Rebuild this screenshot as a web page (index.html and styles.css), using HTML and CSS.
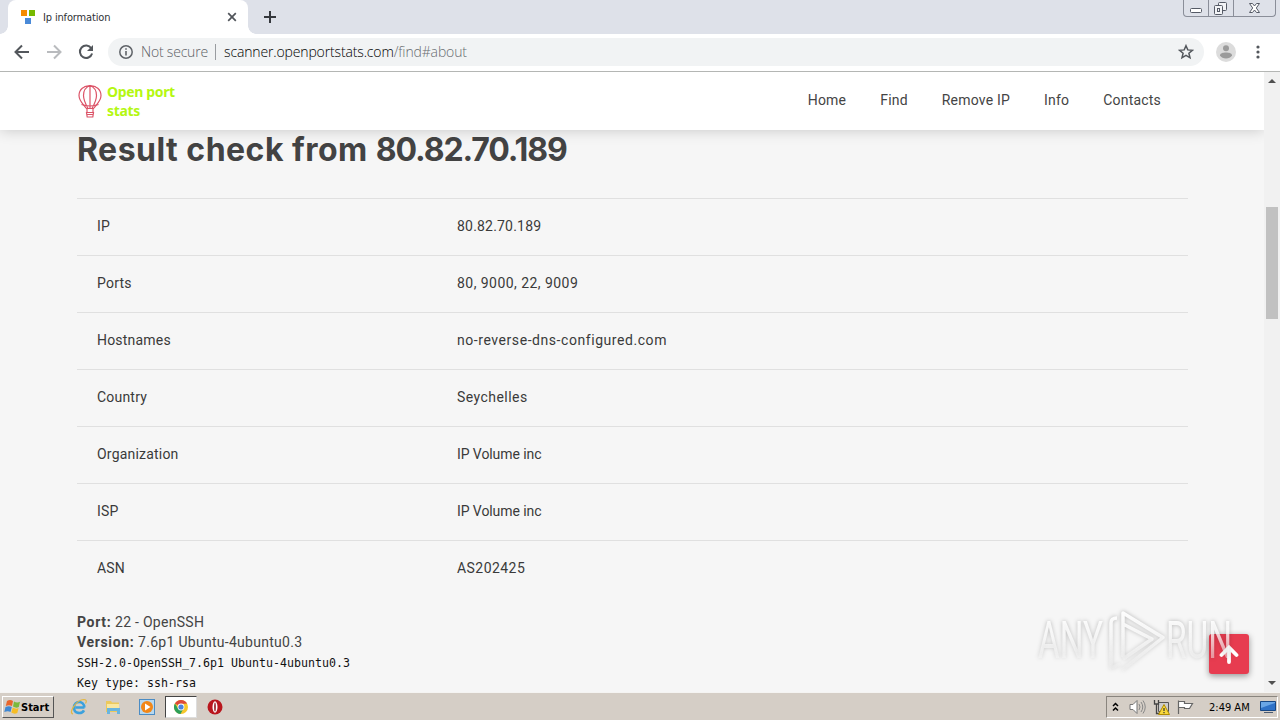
FILE: index.html
```html
<!DOCTYPE html>
<html lang="en">
<head>
    <meta charset="UTF-8">
    <meta name="viewport" content="width=device-width, initial-scale=1.0">
    <title>Ip information</title>
    <link rel="stylesheet" href="styles.css">
</head>
<body>
    <div class="screen">
        <!-- tab strip -->
        <div class="tabs">
            <div class="tab">
                <svg class="favicon" width="14" height="14" viewBox="0 0 14 14">
                    <path fill="#f58b00" d="M0 0h6v6H0z"/>
                    <path fill="#76b900" d="M8 0h6v6H8z"/>
                    <path fill="#4a8ad8" d="M4 8h6v6H4z"/>
                </svg>
                <span class="tab-title">Ip information</span>
                <svg class="tab-close" width="10" height="10" viewBox="0 0 10 10">
                    <path d="M1.2 1.2l7.6 7.6M8.8 1.2L1.2 8.8" stroke="#50545a" stroke-width="1.7"/>
                </svg>
            </div>
            <svg class="tab-new" width="12" height="12" viewBox="0 0 12 12">
                <path d="M6 0v12M0 6h12" stroke="#35383d" stroke-width="2"/>
            </svg>
            <div class="window-buttons">
                <span class="wb wb-min">
                    <svg width="24" height="16" viewBox="0 0 24 16"><rect x="6.500" y="8.500" width="11" height="4" rx="1" fill="#fff" stroke="#555a66"/></svg>
                </span>
                <span class="wb wb-max">
                    <svg width="24" height="16" viewBox="0 0 24 16">
                        <g fill="#f2f3f6" stroke="#555a66"><rect x="9.500" y="2.500" width="8" height="8" rx="1"/><rect x="5.500" y="5.500" width="8" height="9" rx="1"/><rect x="8.500" y="8.500" width="2" height="3"/></g>
                    </svg>
                </span>
                <span class="wb wb-close">
                    <svg width="41" height="16" viewBox="0 0 41 16"><path d="M15.500 3.500h3l2 2.500 2-2.500h3l-3.200 4.500 3.200 4.500h-3l-2-2.500-2 2.500h-3L18.700 8z" fill="#fff" stroke="#555a66"/></svg>
                </span>
            </div>
        </div>

        <!-- toolbar -->
        <div class="toolbar">
            <div class="nav-icons">
                <svg width="16" height="16" viewBox="0 0 16 16"><path d="M15 8H2M8 1.500L1.500 8 8 14.500" fill="none" stroke="#53575c" stroke-width="2"/></svg>
                <svg width="16" height="16" viewBox="0 0 16 16"><path d="M1 8h13M8 1.500L14.500 8 8 14.500" fill="none" stroke="#b9bbbe" stroke-width="2"/></svg>
                <svg width="16" height="16" viewBox="0 0 16 16"><path d="M13.300 4.300A6.200 6.200 0 1 0 14.100 9.500" fill="none" stroke="#53575c" stroke-width="2"/><path d="M15 1v6H9z" fill="#53575c"/></svg>
            </div>
            <div class="address">
                <svg class="info" width="14" height="14" viewBox="0 0 14 14"><circle cx="7" cy="7" r="6.200" fill="none" stroke="#5f6368" stroke-width="1.500"/><path d="M7 6v4.500M7 3.300v1.500" stroke="#5f6368" stroke-width="1.600"/></svg>
                <span class="secure">Not secure</span>
                <span class="divider"></span>
                <span class="host">scanner.openportstats.com</span><span class="path">/find#about</span>
                <svg class="star" width="16" height="16" viewBox="0 0 16 16"><path d="M8 1.700l1.800 4.200 4.600.4-3.500 3 1.100 4.500L8 11.400l-4 2.400 1.100-4.500-3.500-3 4.600-.4z" fill="none" stroke="#53575c" stroke-width="1.500"/></svg>
            </div>
            <svg class="avatar" width="20" height="20" viewBox="0 0 20 20"><circle cx="10" cy="10" r="10" fill="#dcdcdc"/><circle cx="10" cy="6.300" r="3" fill="#9b9b9b"/><path d="M4 13.500c0-2.200 3-3 6-3s6 .8 6 3c-1 2-3.500 3-6 3s-5-1-6-3z" fill="#9b9b9b"/></svg>
            <svg class="dots" width="4" height="14" viewBox="0 0 4 14"><g fill="#53575c"><circle cx="2" cy="2" r="1.600"/><circle cx="2" cy="7" r="1.600"/><circle cx="2" cy="12" r="1.600"/></g></svg>
        </div>

        <!-- site -->
        <div class="viewport">
            <div class="page">
                <header class="header">
                    <a class="logo">
                        <svg width="24" height="34" viewBox="0 0 24 34">
                            <g fill="none" stroke="#dc5468" stroke-width="1.200">
                                <path d="M8.500 24.500C5 20 1 17 1 11.500 1 5.500 6 1.500 12 1.500s11 4 11 10c0 5.500-4 8.500-7.500 13z"/>
                                <path d="M10 24.500C7 19 5.500 16 5.500 11.500c0-5 2.500-8.500 6.500-10 4 1.500 6.500 5 6.500 10 0 4.500-1.500 7.500-4.500 13M12 1.500v23M3.500 20.500q8.500 3 17 0M6.500 2.500h11"/>
                                <path d="M9 24.500v4M15 24.500v4M8.500 28.500h7l-.7 4.500H9.200zM9 30.500h6"/>
                            </g>
                        </svg>
                        <span class="logo-text">Open port<br>stats</span>
                    </a>
                    <nav class="menu">
                        <a>Home</a>
                        <a>Find</a>
                        <a>Remove IP</a>
                        <a>Info</a>
                        <a>Contacts</a>
                    </nav>
                </header>
                <main class="content">
                    <h2>Result check from <span class="address-ip">80.82.70.189</span></h2>
                    <div class="table">
                        <div class="row"><span>IP</span><span>80.82.70.189</span></div>
                        <div class="row"><span>Ports</span><span class="wide">80, 9000, 22, 9009</span></div>
                        <div class="row"><span>Hostnames</span><span class="wider">no-reverse-dns-configured.com</span></div>
                        <div class="row"><span>Country</span><span class="wide">Seychelles</span></div>
                        <div class="row"><span>Organization</span><span class="tight">IP Volume inc</span></div>
                        <div class="row"><span>ISP</span><span class="tight">IP Volume inc</span></div>
                        <div class="row"><span>ASN</span><span class="wide">AS202425</span></div>
                    </div>
                    <div class="port">
                        <p><b>Port:</b> 22 - OpenSSH</p>
                        <p><b>Version:</b> 7.6p1 Ubuntu-4ubuntu0.3</p>
                        <pre>SSH-2.0-OpenSSH_7.6p1 Ubuntu-4ubuntu0.3
Key type: ssh-rsa</pre>
                    </div>
                </main>
                <a class="to-top">
                    <svg width="20" height="20" viewBox="0 0 20 20"><path d="M10 18V4M2.500 11L10 3.500l7.500 7.500" fill="none" stroke="#fff" stroke-width="3.800" stroke-linecap="round"/></svg>
                </a>
            </div>
            <div class="scrollbar">
                <span class="sb-up"></span>
                <span class="sb-thumb"></span>
                <span class="sb-down"></span>
            </div>
            <!-- watermark -->
            <svg class="watermark" width="210" height="80" viewBox="0 0 210 80">
                <defs>
                    <linearGradient id="fade" gradientUnits="userSpaceOnUse" x1="0" y1="8" x2="0" y2="68">
                        <stop offset="0" stop-color="#fff" stop-opacity=".95"/>
                        <stop offset=".4" stop-color="#fff" stop-opacity=".75"/>
                        <stop offset="1" stop-color="#f2f2f2" stop-opacity=".3"/>
                    </linearGradient>
                </defs>
                <g class="wm-shape">
                    <text x="7" y="54" textLength="65" lengthAdjust="spacingAndGlyphs" fill="url(#fade)">ANY</text>
                    <text x="135" y="54" textLength="66" lengthAdjust="spacingAndGlyphs" fill="url(#fade)">RUN</text>
                    <path d="M86 14q-6 0-6 5v45l9-4M92 53V9l40 24.500L91 66M92 20l29 15-29 20" fill="none" stroke="url(#fade)" stroke-width="3.500" stroke-linejoin="round"/>
                </g>
            </svg>
        </div>

        <!-- taskbar -->
        <div class="taskbar">
            <div class="start">
                <svg width="17" height="16" viewBox="0 0 17 16">
                    <path fill="#e9652b" d="M3 2q3-2 6 0L8 7Q5 5.500 1.800 7z"/>
                    <path fill="#7bb93c" d="M10 2.500q3 2 6 .3L14.800 8Q12 9.500 9 7.500z"/>
                    <path fill="#3f87d2" d="M1.500 8Q5 6.500 7.800 8l-1.300 5Q4 11.500.3 13z"/>
                    <path fill="#f6bd26" d="M8.800 8.500q3 2 5.800.5l-1.300 5q-3 1.500-6-.5z"/>
                </svg>
                <span>Start</span>
            </div>
            <div class="quick">
                <span class="q">
                    <svg width="18" height="18" viewBox="0 0 18 18"><path d="M14.500 9.500h-9M14.300 9.500C14.300 2 4 2.500 4 9.500s8 6.500 10 2.800" fill="none" stroke="#3ba1dd" stroke-width="2.600"/><path d="M3 16C-2 15 6 2 14 1.500c3 0 2.500 2.500 1.500 4" fill="none" stroke="#e3b73f" stroke-width="1.200"/></svg>
                </span>
                <span class="q">
                    <svg width="18" height="18" viewBox="0 0 18 18"><path d="M2 3h5l1 1.500h7V14H2z" fill="#ecc95c"/><path d="M3 6h12v7H3z" fill="#f9e7a0"/><path d="M3 10h13v6h-3v-3H6v3H3z" fill="#69b5df"/></svg>
                </span>
                <span class="q">
                    <svg width="18" height="18" viewBox="0 0 18 18"><rect x="1.500" y="1.500" width="15" height="15" fill="#b7d8ef" stroke="#4b8cc4"/><circle cx="9" cy="9" r="6" fill="#f28718"/><path d="M7 5.500l5.500 3.500L7 12.500z" fill="#fff"/></svg>
                </span>
                <span class="q q-active">
                    <svg width="16" height="16" viewBox="0 0 16 16"><circle cx="8" cy="8" r="7" fill="#f6c72c"/><path d="M8 8L1.900 4.500A7 7 0 0 1 14.100 4.600L8 5z" fill="#dd493a"/><path d="M1.900 4.500A7 7 0 0 0 7.500 15l3-5.500H5z" fill="#2c9f59"/><circle cx="8" cy="8" r="3.400" fill="#fff"/><circle cx="8" cy="8" r="2.600" fill="#4a83e0"/></svg>
                </span>
                <span class="q">
                    <svg width="16" height="16" viewBox="0 0 16 16"><circle cx="8" cy="8" r="7.500" fill="#b9161d"/><ellipse cx="8" cy="8" rx="2.500" ry="5.800" fill="#fff"/><ellipse cx="8" cy="8" rx=".8" ry="4.500" fill="#8d1117"/></svg>
                </span>
            </div>
            <div class="tray">
                <svg class="t-chev" width="7" height="10" viewBox="0 0 7 10"><path d="M1 4l2.500-2.500L6 4M1 8.500L3.500 6 6 8.500" fill="none" stroke="#000" stroke-width="1.500"/></svg>
                <svg class="t-vol" width="17" height="16" viewBox="0 0 17 16"><path d="M1 5.500h3L8 1.500v13l-4-4H1z" fill="#fff" stroke="#777"/><path d="M10 5q2 3 0 6M12 3q3.500 5 0 10M14 1.500q4.500 6.500 0 13" fill="none" stroke="#888"/></svg>
                <svg class="t-net" width="17" height="16" viewBox="0 0 17 16"><path d="M5.500 3.500h10v9h-10z" fill="#ccc" stroke="#555"/><path d="M1.500 1v4h4V1M3.500 5v9.500h5" fill="none" stroke="#444" stroke-width="1.300"/><path d="M11 5.500l5.500 10h-11z" fill="#f8d83b" stroke="#b08b00"/><path d="M11 9v3M11 13v1.200" stroke="#333" stroke-width="1.200"/></svg>
                <svg class="t-flag" width="17" height="16" viewBox="0 0 17 16"><path d="M1.500 15V1.500M1.500 2.500h6v2h8l-3 5h-5v-1h-6" fill="#fff" stroke="#666" stroke-width="1.200"/></svg>
                <span class="clock">2:49 AM</span>
                <svg class="t-desk" width="16" height="14" viewBox="0 0 16 14"><path d="M.5 1.500h15v9H.5z" fill="#2f72c7" stroke="#174784"/><path d="M1 8L15 3v-1H1z" fill="#6aa6e6"/><path d="M4 12.500h9" stroke="#4b5a70"/></svg>
            </div>
        </div>
    </div>
</body>
</html>
```
FILE: styles.css
```css
* {
    margin: 0;
    padding: 0;
    box-sizing: border-box;
}
body {
    overflow: hidden;
}
svg {
    display: block;
    flex: none;
}
.screen {
    display: flex;
    flex-direction: column;
    width: 1280px;
    height: 720px;
    overflow: hidden;
}

/* tabs */
.tabs {
    display: flex;
    height: 34px;
    background: #dee1e9;
    font: 11px "DejaVu Sans Condensed", "DejaVu Sans", sans-serif;
}
.tab {
    position: relative;
    display: flex;
    align-items: center;
    margin-left: 8px;
    padding: 0 11px 0 13px;
    width: 240px;
    background: #fff;
    border-radius: 8px 8px 0 0;
}
.tab::before,
.tab::after {
    content: "";
    position: absolute;
    bottom: 0;
    width: 8px;
    height: 8px;
}
.tab::before {
    left: -8px;
    background: radial-gradient(circle at 0 0, transparent 7.5px, #fff 8px);
}
.tab::after {
    right: -8px;
    background: radial-gradient(circle at 100% 0, transparent 7.5px, #fff 8px);
}
.tab-title {
    flex: 1;
    margin-left: 8px;
    color: #303236;
    letter-spacing: -0.15px;
}
.tab-new {
    margin: 11px 0 0 16px;
}
.window-buttons {
    display: flex;
    margin-left: auto;
    margin-right: 4px;
    width: 93px;
    height: 17px;
    border: 1px solid #8a8e99;
    border-top: 0;
    border-radius: 0 0 4px 4px;
}
.wb + .wb {
    border-left: 1px solid #8a8e99;
}

/* toolbar */
.toolbar {
    display: flex;
    align-items: center;
    height: 38px;
    padding-bottom: 1px;
    background: #fff;
    border-bottom: 1px solid #b4b6b4;
    font: 14px "Open Sans", sans-serif;
}
.nav-icons {
    display: flex;
    gap: 16px;
    margin-left: 14px;
}
.address {
    display: flex;
    align-items: center;
    margin-left: 14px;
    padding: 0 10px 0 11px;
    width: 1096px;
    height: 28px;
    background: #f1f3f4;
    border-radius: 14px;
    white-space: nowrap;
    letter-spacing: -0.14px;
}
.secure,
.host,
.path {
    padding-bottom: 1px;
    font-weight: 300;
}
.secure {
    margin-left: 8px;
    width: 67px;
    color: #5c6065;
    letter-spacing: -0.2px;
}
.divider {
    margin: 0 8px 0 7px;
    width: 1px;
    height: 16px;
    background: #999ca0;
}
.host {
    color: #000;
}
.path {
    color: #686c70;
}
.star {
    margin-left: auto;
}
.avatar {
    margin-left: 12px;
}
.dots {
    margin-left: 20px;
}

/* site */
.viewport {
    position: relative;
    display: flex;
    height: 620px;
}
.page {
    position: relative;
    width: 1264px;
    background: #f6f6f6;
    color: #444;
    font: 14px/20px Roboto, sans-serif;
    overflow: hidden;
}
.header {
    position: relative;
    display: flex;
    justify-content: space-between;
    padding: 0 103px 0 78px;
    height: 58px;
    background: #fff;
    box-shadow: 0 0 14px rgba(0, 0, 0, 0.2);
}
.logo {
    display: flex;
    padding-top: 12px;
}
.logo-text {
    margin: -2px 0 0 5px;
    color: #b4f712;
    font: bold 14px/19px "Noto Sans", sans-serif;
    letter-spacing: -0.35px;
}
.menu {
    display: flex;
    gap: 34px;
    line-height: 57px;
    letter-spacing: 0.2px;
}
.content {
    padding: 0 76px 0 77px;
}
h2 {
    height: 68px;
    color: #434343;
    font: bold 32px/39px Inter, sans-serif;
    letter-spacing: 0.48px;
    white-space: nowrap;
}
.address-ip {
    letter-spacing: -1.1px;
}
.row {
    display: flex;
    height: 57px;
    padding: 0 20px;
    border-top: 1px solid #e0e0e0;
    color: #3a3a3a;
    line-height: 55px;
    letter-spacing: 0.2px;
}
.row span:first-child {
    width: 360px;
}
.wide {
    letter-spacing: 0.45px;
}
.wider {
    letter-spacing: 0.56px;
}
.tight {
    letter-spacing: -0.08px;
}
.port {
    margin-top: 15px;
    letter-spacing: 0.28px;
}
.port b {
    font-weight: 700;
    letter-spacing: 0.65px;
}
.port pre {
    padding-top: 1px;
    color: #111;
    font: 11.6px/20px "DejaVu Sans Mono", monospace;
    letter-spacing: 0.02px;
}
.to-top {
    position: absolute;
    left: 1209px;
    top: 562px;
    display: flex;
    align-items: center;
    justify-content: center;
    width: 40px;
    height: 40px;
    background: #e73c50;
    border-radius: 3px;
    box-shadow: 0 2px 6px rgba(0, 0, 0, 0.4);
}
.scrollbar {
    display: flex;
    flex-direction: column;
    align-items: center;
    width: 16px;
    background: #f1f1f1;
}
.sb-up,
.sb-down {
    border: 4px solid transparent;
}
.sb-up {
    margin-top: 3px;
    border-bottom-color: #505050;
}
.sb-thumb {
    margin-top: 124px;
    width: 12px;
    height: 112px;
    background: #c1c1c1;
}
.sb-down {
    margin: auto 0 3px;
    border-top-color: #505050;
}
.watermark {
    position: absolute;
    left: 1031px;
    top: 532px;
}
.wm-shape {
    filter: drop-shadow(0 0 2px rgba(0, 0, 0, 0.3));
    font: 51px Roboto, sans-serif;
}

/* taskbar */
.taskbar {
    display: flex;
    align-items: center;
    height: 28px;
    padding: 1px 2px 0;
    background: #d5cec6;
    border-top: 1px solid #f5f4f2;
    font: 11px "DejaVu Sans Condensed", "DejaVu Sans", sans-serif;
}
.start {
    display: flex;
    align-items: center;
    padding-left: 1px;
    width: 52px;
    height: 22px;
    border: 1px solid #fff;
    border-right-color: #555;
    border-bottom-color: #555;
    color: #000;
    font-weight: bold;
}
.quick {
    display: flex;
    margin-left: 9px;
    gap: 2px;
}
.q {
    display: flex;
    align-items: center;
    justify-content: center;
    width: 32px;
    height: 22px;
}
.q-active {
    background: #fff;
    border: 1px solid #ddd;
    border-top-color: #444;
    border-left-color: #444;
}
.tray {
    display: flex;
    align-items: center;
    margin-left: auto;
    padding: 0 1px 0 5px;
    width: 172px;
    height: 22px;
    border: 1px solid #8a857e;
    border-right-color: #fff;
    border-bottom-color: #fff;
}
.t-vol {
    margin-left: 10px;
}
.t-net,
.t-flag {
    margin-left: 7px;
}
.clock {
    margin-left: 15px;
    color: #000;
    white-space: nowrap;
}
.t-desk {
    margin-left: auto;
}
```
